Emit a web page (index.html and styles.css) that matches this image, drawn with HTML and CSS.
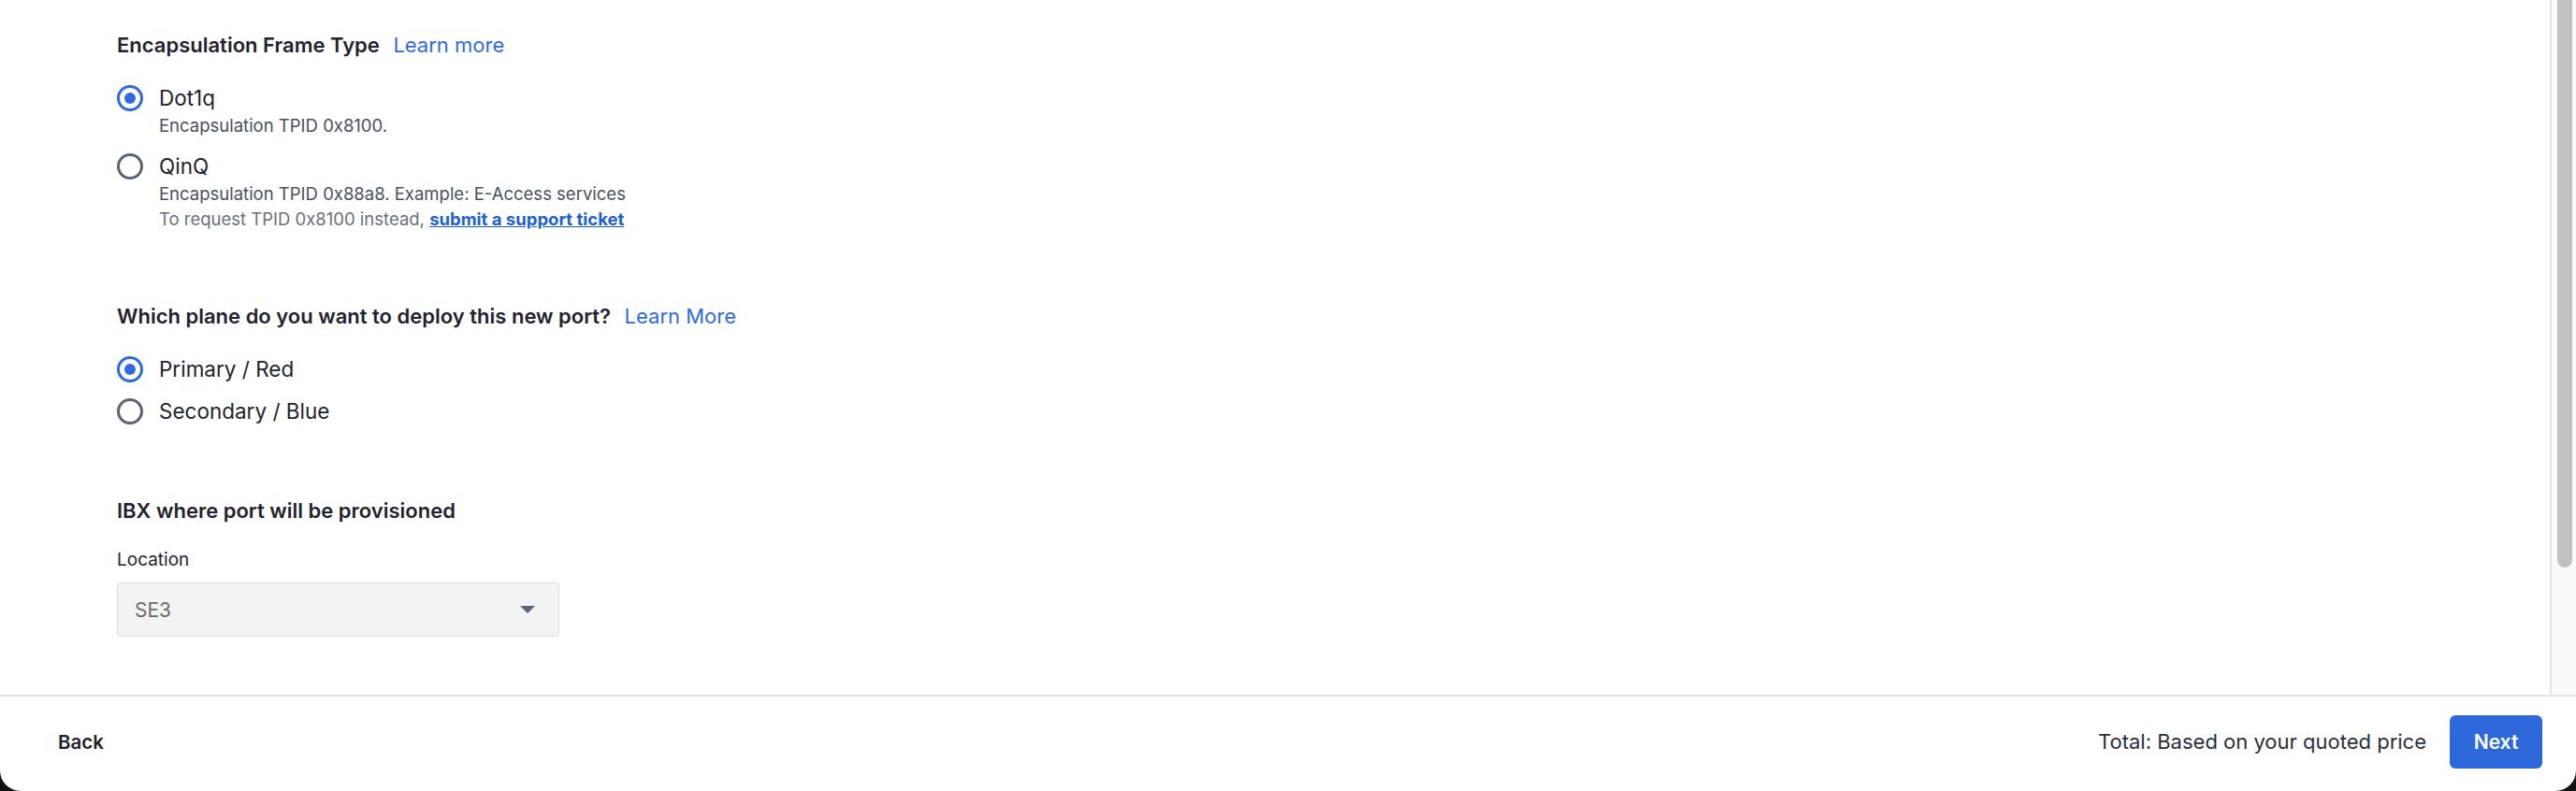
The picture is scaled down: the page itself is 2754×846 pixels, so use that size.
FILE: index.html
```html
<!DOCTYPE html>
<html lang="en">
<head>
    <meta charset="UTF-8">
    <title>Port details</title>
    <link rel="stylesheet" href="styles.css">
</head>
<body>
<div class="window">
    <div class="content">
        <div class="form">
            <section class="group">
                <h3 class="group-title">Encapsulation Frame Type <a href="" class="link">Learn more</a></h3>
                <div class="options">
                    <label class="option">
                        <span class="radio checked"></span>
                        <span class="option-body">
                            <span class="option-label">Dot1q</span>
                            <span class="option-desc">Encapsulation TPID 0x8100.</span>
                        </span>
                    </label>
                    <label class="option">
                        <span class="radio"></span>
                        <span class="option-body">
                            <span class="option-label">QinQ</span>
                            <span class="option-desc">Encapsulation TPID 0x88a8. Example: E-Access services</span>
                            <span class="option-note">To request TPID 0x8100 instead, <a href="" class="ticket">submit a support ticket</a></span>
                        </span>
                    </label>
                </div>
            </section>

            <section class="group">
                <h3 class="group-title">Which plane do you want to deploy this new port? <a href="" class="link">Learn More</a></h3>
                <div class="options">
                    <label class="option">
                        <span class="radio checked"></span>
                        <span class="option-body"><span class="option-label">Primary / Red</span></span>
                    </label>
                    <label class="option">
                        <span class="radio"></span>
                        <span class="option-body"><span class="option-label">Secondary / Blue</span></span>
                    </label>
                </div>
            </section>

            <section class="group">
                <h3 class="group-title">IBX where port will be provisioned</h3>
                <div class="field">
                    <span class="field-label">Location</span>
                    <div class="select">
                        <span class="select-value">SE3</span>
                        <span class="caret"></span>
                    </div>
                </div>
            </section>
        </div>
        <div class="scrollbar"><div class="thumb"></div></div>
    </div>

    <div class="footer">
        <a href="" class="back">Back</a>
        <div class="footer-right">
            <span class="total">Total: Based on your quoted price</span>
            <button class="next">Next</button>
        </div>
    </div>
</div>
</body>
</html>
```

FILE: styles.css
```css
*{
    margin: 0;
    padding: 0;
    box-sizing: border-box;
}
html,body{
    height: 100%;
    background: #111512;
}
body{
    font-family: "Inter", "Liberation Sans", sans-serif;
    color: #1f232d;
}
.window{
    height: 846px;
    display: flex;
    flex-direction: column;
    background: #fff;
    border-radius: 0 0 22px 22px;
    overflow: hidden;
}
.content{
    flex: 1;
    display: flex;
    min-height: 0;
}
.form{
    flex: 1;
    padding: 34px 0 0 125px;
    display: flex;
    flex-direction: column;
    gap: 77px;
}
.group-title{
    font-size: 22px;
    line-height: 28px;
    font-weight: 600;
    color: #1f232d;
}
.link{
    margin-left: 9px;
    font-weight: 400;
    color: #2f6bdc;
    text-decoration: none;
}
.options{
    margin-top: 28px;
    display: flex;
    flex-direction: column;
    gap: 15px;
}
.option{
    display: flex;
    gap: 17px;
    cursor: pointer;
}
.radio{
    flex: none;
    width: 28px;
    height: 28px;
    margin-top: 1px;
    border: 3px solid #5d6478;
    border-radius: 50%;
    display: flex;
    align-items: center;
    justify-content: center;
}
.radio.checked{
    border-color: #2f6bdc;
}
.radio.checked::after{
    content: "";
    width: 12px;
    height: 12px;
    border-radius: 50%;
    background: #2f6bdc;
}
.option-body{
    display: flex;
    flex-direction: column;
}
.option-label{
    font-size: 22.5px;
    line-height: 30px;
    color: #1f232d;
}
.option-desc{
    font-size: 18.5px;
    line-height: 28px;
    color: #4a505c;
}
.option-note{
    font-size: 18.5px;
    line-height: 26px;
    color: #6a707c;
}
.ticket{
    font-weight: 700;
    color: #1f5fcf;
}
.field{
    margin-top: 27px;
    display: flex;
    flex-direction: column;
}
.field-label{
    font-size: 19px;
    line-height: 24px;
    color: #1f232d;
}
.select{
    margin-top: 12px;
    width: 473px;
    height: 58px;
    padding: 0 25px 0 18px;
    background: #f3f3f3;
    border: 1px solid #dcdcdc;
    border-radius: 4px;
    display: flex;
    align-items: center;
    justify-content: space-between;
}
.select-value{
    font-size: 21px;
    color: #6b6b6b;
}
.caret{
    width: 0;
    height: 0;
    border-left: 8px solid transparent;
    border-right: 8px solid transparent;
    border-top: 8px solid #5a6377;
}
.scrollbar{
    flex: none;
    width: 28px;
    background: #f9f9f9;
    border-left: 2px solid #e6e6e6;
    padding: 0 4px 0 6px;
}
.thumb{
    height: 607px;
    background: #c1c1c1;
    border-radius: 0 0 8px 8px;
}
.footer{
    flex: none;
    height: 103px;
    border-top: 2px solid #e4e4e4;
    padding: 0 36px 5px 62px;
    display: flex;
    align-items: center;
    justify-content: space-between;
}
.back{
    font-size: 20.5px;
    font-weight: 600;
    color: #1f232d;
    text-decoration: none;
}
.footer-right{
    display: flex;
    align-items: center;
    gap: 25px;
}
.total{
    font-size: 22px;
    color: #2a2f3a;
}
.next{
    width: 99px;
    height: 57px;
    border: none;
    border-radius: 6px;
    background: #2e69db;
    color: #fff;
    font-family: inherit;
    font-size: 21px;
    font-weight: 600;
}
```
